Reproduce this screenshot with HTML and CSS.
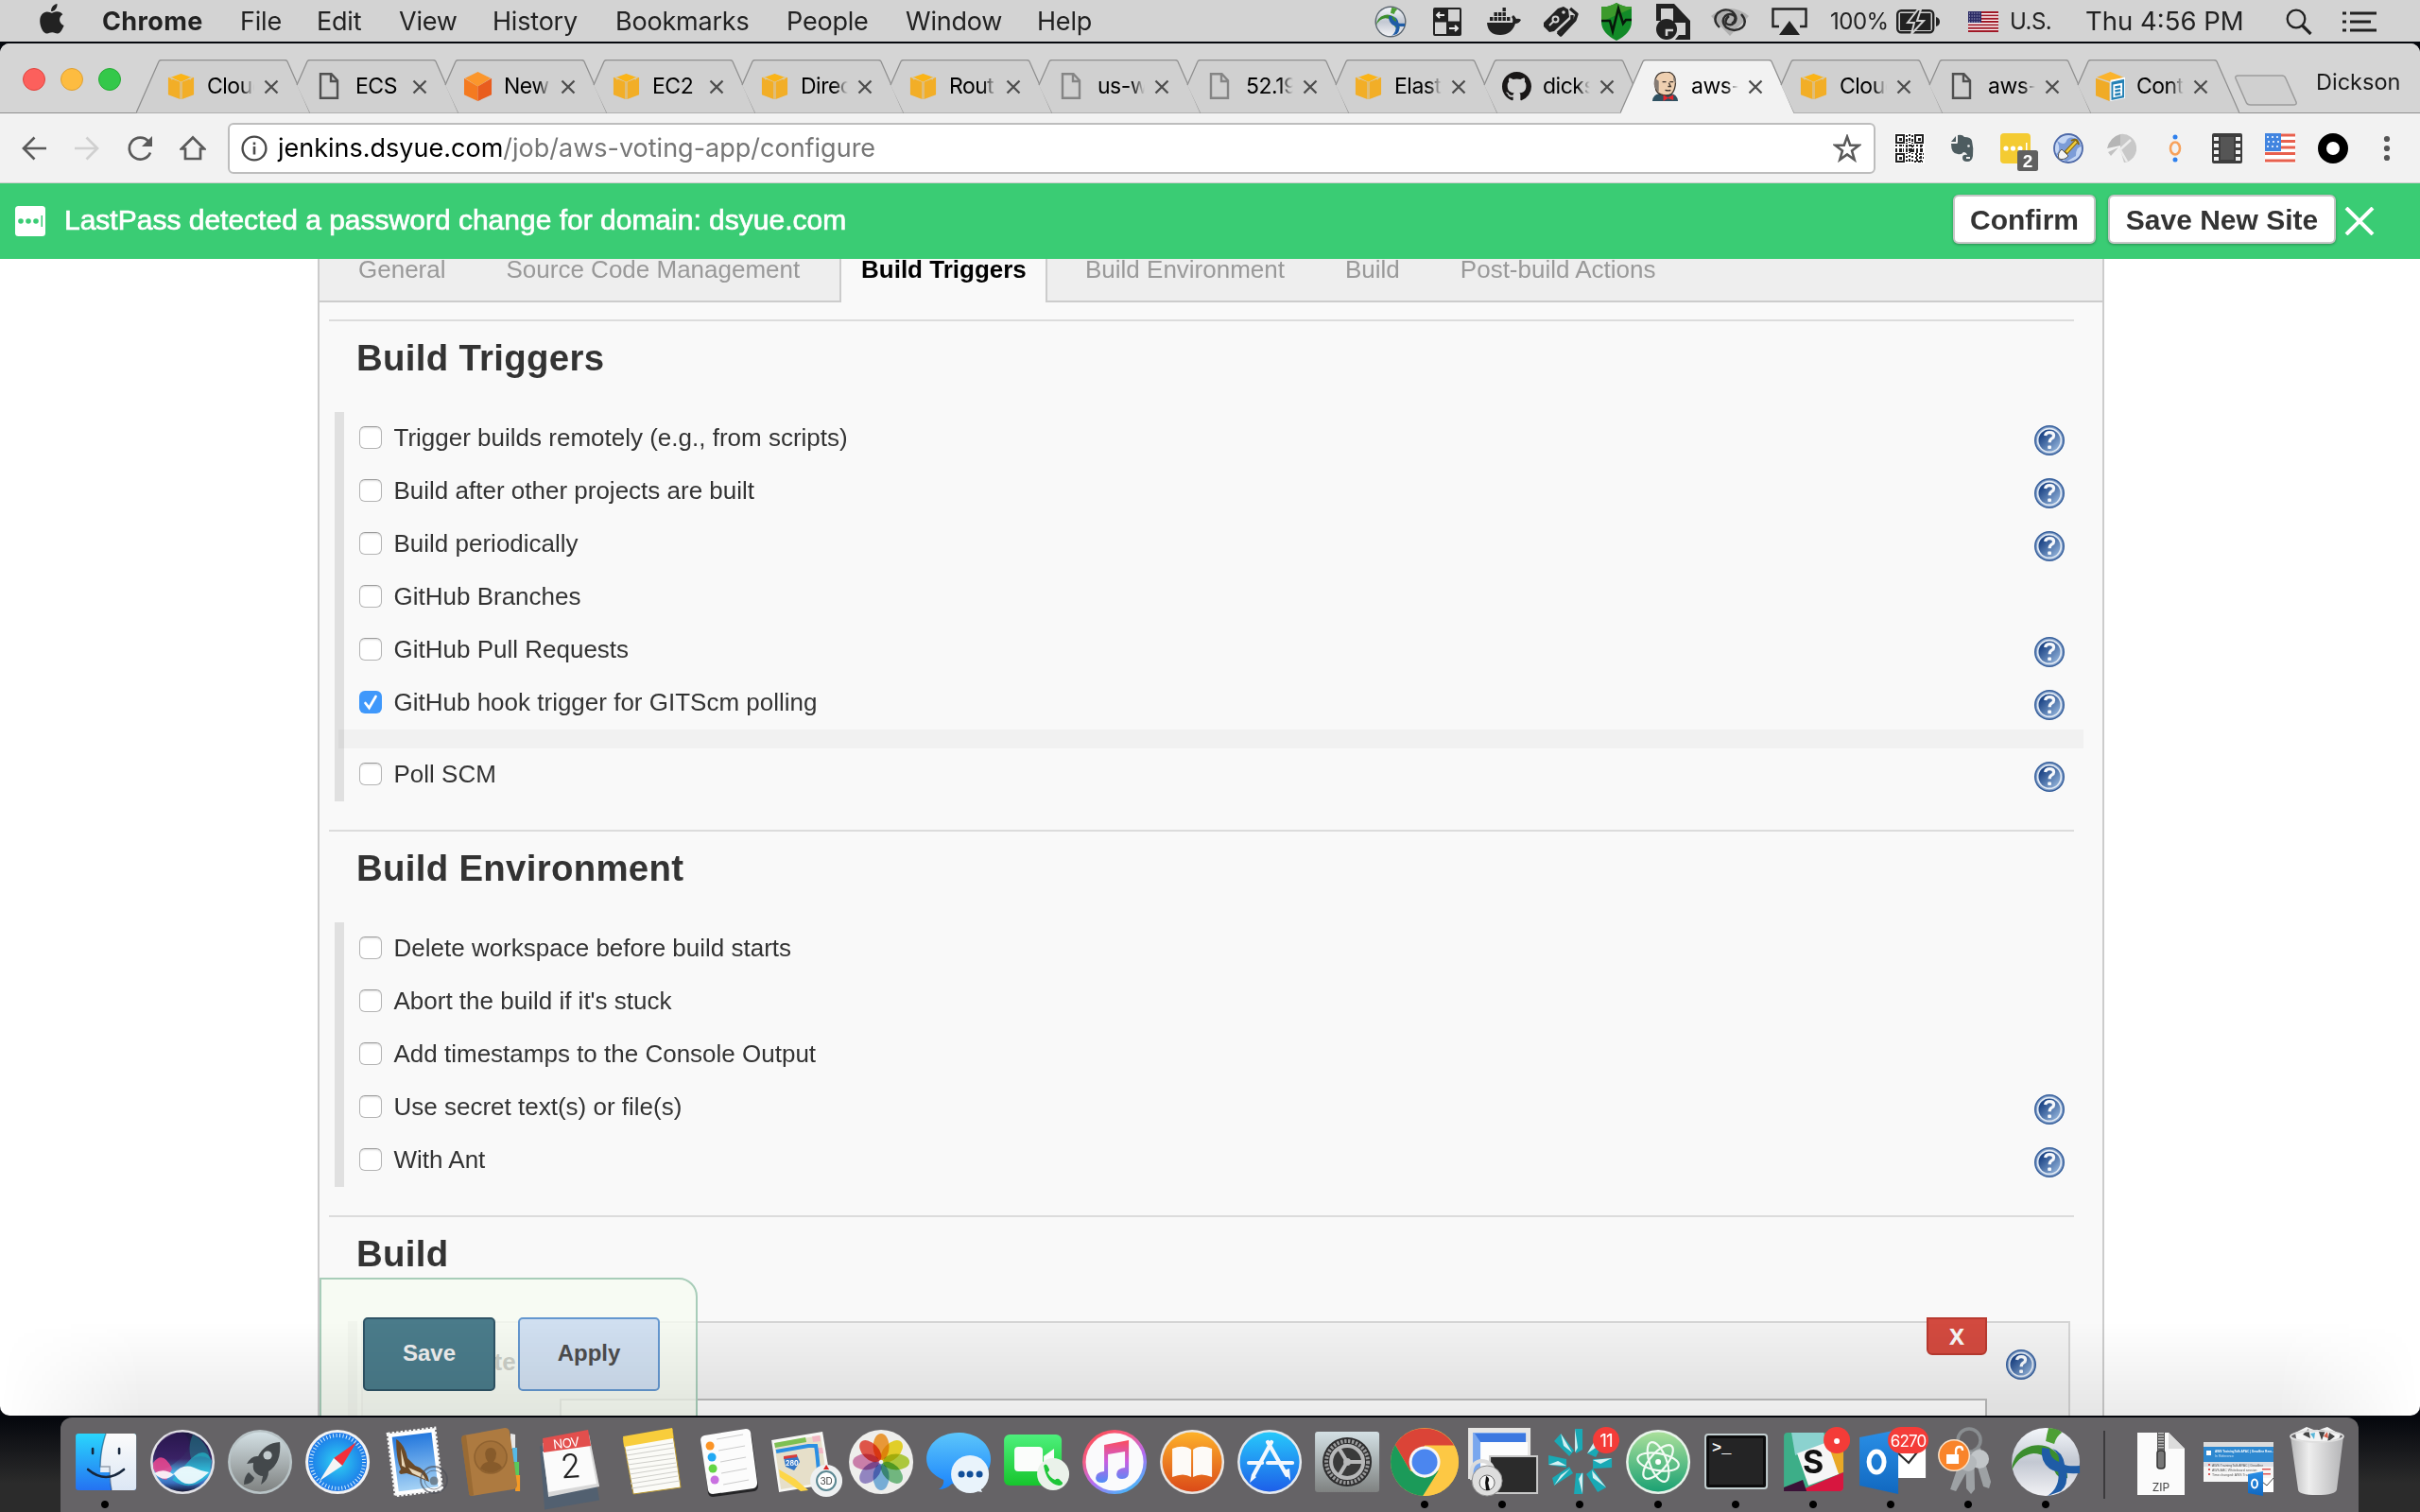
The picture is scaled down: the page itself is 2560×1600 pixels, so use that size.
FILE: index.html
```html
<!DOCTYPE html>
<html lang="en">
<head>
<meta charset="utf-8">
<title>aws-voting-app Config [Jenkins]</title>
<link rel="stylesheet" href="styles.css">
</head>
<body>
<svg class="defs" width="0" height="0">
  <defs>
    <linearGradient id="gHelp" x1="0" y1="0" x2="1" y2="1"><stop offset=".2" stop-color="#1f4788"/><stop offset=".9" stop-color="#8fb0d8"/></linearGradient>
    <linearGradient id="gFinder" x1="0" y1="0" x2="0" y2="1"><stop offset="0" stop-color="#2ad6fd"/><stop offset="1" stop-color="#2472f2"/></linearGradient>
    <linearGradient id="gFinder2" x1="0" y1="0" x2="0" y2="1"><stop offset="0" stop-color="#fbfbfb"/><stop offset="1" stop-color="#dce7f5"/></linearGradient>
    <linearGradient id="gSiri" x1="0" y1="0" x2="0" y2="1"><stop offset="0" stop-color="#1c1740"/><stop offset=".45" stop-color="#3b2a6a"/><stop offset=".68" stop-color="#4ab6ea"/><stop offset=".85" stop-color="#3b6fc0"/><stop offset="1" stop-color="#141432"/></linearGradient>
    <linearGradient id="gSilver" x1="0" y1="0" x2="0" y2="1"><stop offset="0" stop-color="#d3e0e4"/><stop offset="1" stop-color="#7f8281"/></linearGradient>
    <radialGradient id="gSafari"><stop offset="0" stop-color="#2fd3f3"/><stop offset="1" stop-color="#1b76e8"/></radialGradient>
    <linearGradient id="gSky" x1="0" y1="0" x2="0" y2="1"><stop offset="0" stop-color="#2478dd"/><stop offset="1" stop-color="#a5d2f5"/></linearGradient>
    <linearGradient id="gMsg" x1="0" y1="0" x2="0" y2="1"><stop offset="0" stop-color="#5cc6fb"/><stop offset="1" stop-color="#1a83fc"/></linearGradient>
    <linearGradient id="gFt" x1="0" y1="0" x2="0" y2="1"><stop offset="0" stop-color="#4df07c"/><stop offset="1" stop-color="#17c52d"/></linearGradient>
    <linearGradient id="gTunes" x1=".2" y1="0" x2=".8" y2="1"><stop offset="0" stop-color="#fb4a57"/><stop offset=".3" stop-color="#f55f8a"/><stop offset=".6" stop-color="#b36bf5"/><stop offset="1" stop-color="#35c4fa"/></linearGradient>
    <linearGradient id="gNote" x1="0" y1="0" x2="0" y2="1"><stop offset="0" stop-color="#fb4d5c"/><stop offset=".5" stop-color="#c95de0"/><stop offset="1" stop-color="#4f8df7"/></linearGradient>
    <linearGradient id="gBooks" x1="0" y1="0" x2="0" y2="1"><stop offset="0" stop-color="#fdb12a"/><stop offset="1" stop-color="#db4a18"/></linearGradient>
    <linearGradient id="gStore" x1="0" y1="0" x2="0" y2="1"><stop offset="0" stop-color="#27c8fb"/><stop offset="1" stop-color="#1d5fe9"/></linearGradient>
    <linearGradient id="gAtom" x1="0" y1="0" x2="0" y2="1"><stop offset="0" stop-color="#a9df9a"/><stop offset="1" stop-color="#1ba173"/></linearGradient>
    <linearGradient id="gBall" x1="0" y1="0" x2="0" y2="1"><stop offset="0" stop-color="#f4f7fb"/><stop offset=".5" stop-color="#c3c8d2"/><stop offset="1" stop-color="#f2f2f5"/></linearGradient>
    <linearGradient id="gTrash" x1="0" y1="0" x2="1" y2="0"><stop offset="0" stop-color="#b9b9ba"/><stop offset=".35" stop-color="#eeeeee"/><stop offset="1" stop-color="#b4b4b6"/></linearGradient>
    <linearGradient id="gOut" x1="0" y1="0" x2="0" y2="1"><stop offset="0" stop-color="#2a8fe6"/><stop offset="1" stop-color="#1168c0"/></linearGradient>

    <symbol id="tab-first" viewBox="0 0 184 57"><path class="tab-fill" d="M0 56.500L24 2Q25 .5 27 .5H157Q159 .5 160 2L184 56.500z"/><path class="tab-line" d="M0 56.500L24 2Q25 .5 27 .5H157Q159 .5 160 2L184 56.500"/></symbol>
    <symbol id="tab-rest" viewBox="0 0 184 57"><path class="tab-fill" d="M27 56.500L13 27L24 2Q25 .5 27 .5H157Q159 .5 160 2L184 56.500z"/><path class="tab-line" d="M13 27L24 2Q25 .5 27 .5H157Q159 .5 160 2L184 56.500"/></symbol>
    <symbol id="tab-active" viewBox="0 0 184 57"><path class="tab-on" d="M0 57L24 2Q25 .5 27 .5H157Q159 .5 160 2L184 57z"/><path class="tab-line" d="M0 56.500L24 2Q25 .5 27 .5H157Q159 .5 160 2L184 56.500"/></symbol>

    <symbol id="cube" viewBox="0 0 32 32"><path fill="#fbb416" d="M16 2l11 4-11 5-11-5z"/><path fill="#f2ae27" d="M2 6l13 5v19L2 25zM30 6l-13 5v19l13-5z"/><path fill="#e0bd78" d="M14.500 11h3v19h-3z"/><path fill="#d8c8a0" d="M3 5l5 2-2 2zM29 5l-5 2 2 2z"/></symbol>
    <symbol id="cube-orange" viewBox="0 0 32 32"><path fill="#fb962c" d="M16 0l14 7-14 9L2 7z"/><path fill="#f47a20" d="M1 7l15 9v16L1 25z"/><path fill="#e95d1e" d="M31 7l-15 9v16l15-7z"/></symbol>
    <symbol id="cube-doc" viewBox="0 0 32 32"><path fill="#fbb32b" d="M16 0l14 6-13 5L1 6z"/><path fill="#f0ab26" d="M0 7l15 5v20L0 26z"/><path fill="#fff" d="M16 9l16-3v23l-16 3z"/><path fill="#2481b5" d="M17 11l14-3v20l-14 3z"/><path fill="#fff" d="M19 14l10-2v14l-10 2z"/><path stroke="#2481b5" stroke-width="2.500" d="M21 17l6-1M21 21l6-1M21 25l6-1"/></symbol>
    <symbol id="page" viewBox="0 0 22 30"><path fill="none" stroke="currentColor" stroke-width="2.400" d="M2 2.200h11.500l6.500 7V27.800H2zM13 2v8h7"/></symbol>
    <symbol id="octocat" viewBox="0 0 16 16"><path fill="#191717" d="M8 0C3.580 0 0 3.580 0 8c0 3.540 2.290 6.530 5.470 7.590.4.070.55-.17.55-.38 0-.19-.010-.82-.010-1.490-2.010.37-2.530-.49-2.690-.94-.09-.23-.48-.94-.82-1.130-.28-.15-.68-.52-.010-.53.630-.010 1.080.58 1.230.82.720 1.210 1.870.87 2.330.66.070-.52.280-.87.510-1.070-1.780-.2-3.640-.89-3.640-3.950 0-.87.310-1.590.82-2.150-.08-.2-.36-1.020.08-2.120 0 0 .67-.21 2.200.82.640-.18 1.320-.27 2-.27s1.360.09 2 .27c1.530-1.040 2.200-.82 2.200-.82.440 1.100.160 1.920.08 2.120.510.560.82 1.270.82 2.150 0 3.070-1.870 3.750-3.650 3.950.290.250.54.730.54 1.480 0 1.070-.010 1.930-.010 2.200 0 .210.150.46.55.38A8.010 8.010 0 0 0 16 8c0-4.420-3.580-8-8-8z"/></symbol>
    <symbol id="jenkins" viewBox="0 0 32 32"><path fill="#2f5161" d="M2 32q1-8 8-8h12q7 0 8 8z"/><path fill="#eecfb0" stroke="#3c332c" stroke-width="1.300" d="M6 20Q2 4 12 1q10-3 14 4 2 4 1 10t-4 9q-5 3-11 1-4-1-6-5z"/><path fill="#857b74" d="M5 7q-3 7 1 12l3 3V10zM25 5q3 3 3 8l-3-4z"/><path stroke="#3c332c" stroke-width="1.300" fill="none" d="M13 11h4M21 11h4M20 12l2 4h-3M16 20q4 1 6 0"/><path fill="#e8262c" d="M14 25l5 3 6-3v6l-6-2-5 3z"/></symbol>
    <symbol id="close" viewBox="0 0 16 16"><path stroke="#4d4d4d" stroke-width="2.300" d="M1.500 1.500l13 13M14.500 1.500l-13 13"/></symbol>
    <symbol id="help" viewBox="0 0 32 32"><circle cx="16" cy="16" r="16" fill="#365f9c"/><circle cx="16" cy="16" r="14.500" fill="#83a0c9"/><circle cx="16" cy="16" r="13.200" fill="#e3ebf5"/><circle cx="16" cy="16" r="11.500" fill="url(#gHelp)"/><path fill="none" stroke="#f7f9fc" stroke-width="3.200" d="M11.600 11q.4-3.400 4.600-3.400 4.400 0 4.400 3.300 0 2-2.200 3.200-2.200 1.200-2.200 4.100"/><rect x="14.200" y="21.500" width="3.800" height="3.600" rx="1" fill="#f7f9fc"/></symbol>
    <symbol id="usflag" viewBox="0 0 32 22"><path fill="#fff" d="M0 0h32v22H0z"/><path stroke="#a01826" stroke-width="1.900" d="M0 1h32M0 4.400h32M0 7.700h32M0 11h32M0 14.400h32M0 17.700h32M0 21h32"/><path fill="#2c2c66" d="M0 0h14v12H0z"/><path stroke="#c5c8df" stroke-width="1" stroke-dasharray="1 1.600" d="M1 2h12M1 5h12M1 8h12M1 11h12"/></symbol>
    <symbol id="globe-ball" viewBox="0 0 74 74"><circle cx="37" cy="37" r="36" fill="url(#gBall)"/><path fill="#3c8e2e" d="M1 46Q2 26 22 20 44 16 54 36 60 46 60 54 50 56 46 46 40 28 24 28 8 30 1 46z"/><path fill="#4d9f35" d="M40 1q12 1 14 5-6 4-8 12l-9-3Q38 8 40 1z"/><path fill="#1f5ca6" d="M33 22q-2 14 8 22 8 6 32 5v-8q-12 1-16-1-2-14-13-17 8 6 7 14-10-4-10-14z"/><path fill="#1f5ca6" d="M50 46h9q2 16-6 22l-14 5q14-10 11-27z"/></symbol>
  </defs>
</svg>

<header class="menubar">
  <svg class="apple" viewBox="0 0 26 32"><path fill="#222" d="M18.500 0c.3 2.700-.8 4.700-2 6.100-1.300 1.500-2.900 2.100-4.400 2-.2-2.500.7-4.400 2-5.800C15.300 1 17 .2 18.500 0zM12.800 9.700c1 0 2.900-1.500 5.500-1.400 2.700.1 4.800 1.200 6 3-4.700 3-4.200 9.400 1.300 11.700-1 3-3.900 8.500-6.700 8.600-2 .1-3-1.300-5.600-1.300s-3.500 1.200-5.500 1.300C3.500 31.700.3 24.200.2 18.300.1 12 4 8.600 7.700 8.500c2.200 0 4 1.200 5.100 1.200z"/></svg>
  <nav class="menus">
    <b>Chrome</b><span>File</span><span>Edit</span><span>View</span><span>History</span><span>Bookmarks</span><span>People</span><span>Window</span><span>Help</span>
  </nav>
  <div class="status">
    <svg viewBox="0 0 34 34" width="34" height="34"><circle cx="17" cy="17" r="16.500" fill="#5c6670"/><svg x="1.500" y="1.500" width="31" height="31"><use href="#globe-ball"/></svg></svg>
    <svg viewBox="0 0 30 30" width="30" height="30"><rect width="30" height="30" rx="2" fill="#222"/><path fill="#d3d3d3" d="M16 2h12v12.500H16zM2 15.500h12V28H2z"/><path stroke="#e8e8e8" stroke-width="2" fill="none" d="M4 8h8M7 5L4 8l3 3M17 22h9M23 19l3 3-3 3"/></svg>
    <svg viewBox="0 0 36 30" width="36" height="30"><path fill="#222" d="M0 16h27q1-4-1-6l2-2q2 2 3 4 3-1 5 1-2 4-6 4-4 12-16 12Q1 29 0 16z"/><path fill="#222" d="M3 10h3.400v4H3zM7.500 10h3.400v4H7.500zM12 10h3.400v4H12zM16.500 10h3.400v4h-3.400zM21 10h3.400v4H21zM7.500 5h3.400v4H7.500zM12 5h3.400v4H12zM16.500 5h3.400v4h-3.400zM16.500 0h3.400v4h-3.400z"/></svg>
    <svg viewBox="0 0 38 34" width="38" height="34"><path fill="#222" d="M1 18L16 3l6-2 5 3 1 8-16 15-5 1-6-6z"/><circle cx="22" cy="7" r="1.800" fill="#d3d3d3"/><g fill="none" stroke="#d3d3d3" stroke-width="2"><circle cx="13.500" cy="14.500" r="3"/><path d="M11.500 16.500L7 21"/></g><path fill="none" stroke="#222" stroke-width="3.400" stroke-linejoin="round" d="M29 3l7 6-2 6-15 16-3-3"/><path fill="none" stroke="#222" stroke-width="3.400" d="M31 10v5L16 29"/></svg>
    <svg viewBox="0 0 32 40" width="32" height="40"><path fill="#128a28" d="M16 0q8 5 16 4v16q0 12-16 20Q0 32 0 20V4q8 1 16-4z"/><path fill="#3c9a2c" d="M16 0q8 5 16 4v2L0 20V4q8 1 16-4z"/><path fill="none" stroke="#07160a" stroke-width="2.600" d="M0 19h9l3 11 6-24 5 16 3-4h6"/></svg>
    <svg viewBox="0 0 36 38" width="36" height="38"><path fill="#222" d="M0 0h19l17 18v20H20l4-5h7V20H18V5H5v13H0z"/><circle cx="11" cy="27" r="11" fill="#222"/><path fill="none" stroke="#d3d3d3" stroke-width="2.600" d="M11 34v-6h7"/></svg>
    <svg viewBox="0 0 40 34" width="40" height="34"><path fill="#a6a6a6" d="M0 11Q20-5 40 11L20 32z" opacity=".8"/><g fill="none" stroke="#2c2c2c" stroke-width="2.400"><path d="M9 23Q1 15 7 8q7-6 15-2 7 6 3 12-4 4-9 1-2-4 3-8"/><path d="M32 9q7 8 1 14-8 6-17 0-6-7-1-12 5-4 10 0 2 5-3 8"/></g></svg>
    <svg viewBox="0 0 38 30" width="38" height="30"><path fill="none" stroke="#222" stroke-width="2.400" d="M8 20H1.500V1.500h35V20H30"/><path fill="#222" d="M19 14l11 15H8z"/></svg>
    <span class="s-txt s-pct">100%</span>
    <svg viewBox="0 0 46 26" width="46" height="26"><rect x="1.200" y="1.200" width="38" height="23" rx="4" fill="none" stroke="#222" stroke-width="2.400"/><path fill="#222" d="M42 8q4 1 4 5t-4 5zM4 4h32.500v18H4z"/><path fill="#222" stroke="#d3d3d3" stroke-width="2" d="M23 0L12 14h7l-3 12 13-14h-7l4-12z"/></svg>
    <svg viewBox="0 0 32 22" width="32" height="22"><use href="#usflag"/></svg>
    <span class="s-txt s-us">U.S.</span>
    <span class="s-txt s-time">Thu 4:56 PM</span>
    <svg viewBox="0 0 28 28" width="28" height="28"><circle cx="11" cy="11" r="9.300" fill="none" stroke="#222" stroke-width="2.300"/><path stroke="#222" stroke-width="3.200" d="M17.500 18l9 9"/></svg>
    <svg viewBox="0 0 36 22" width="36" height="22"><path stroke="#222" stroke-width="3.200" d="M0 2h4M8 2h28M0 11h4M8 11h22M0 20h4M8 20h28"/></svg>
  </div>
</header>

<main class="window">
  <div class="tabstrip">
    <div class="lights"><i class="red"></i><i class="yellow"></i><i class="green"></i></div>
    <div class="tabs">
      <div class="tab"><svg class="shape"><use href="#tab-first"/></svg><svg class="fav"><use href="#cube"/></svg><span>Cloud</span><svg class="x"><use href="#close"/></svg></div>
      <div class="tab"><svg class="shape"><use href="#tab-rest"/></svg><svg class="fav doc dark"><use href="#page"/></svg><span class="full">ECS</span><svg class="x"><use href="#close"/></svg></div>
      <div class="tab"><svg class="shape"><use href="#tab-rest"/></svg><svg class="fav"><use href="#cube-orange"/></svg><span>New</span><svg class="x"><use href="#close"/></svg></div>
      <div class="tab"><svg class="shape"><use href="#tab-rest"/></svg><svg class="fav"><use href="#cube"/></svg><span class="full">EC2</span><svg class="x"><use href="#close"/></svg></div>
      <div class="tab"><svg class="shape"><use href="#tab-rest"/></svg><svg class="fav"><use href="#cube"/></svg><span>Direc</span><svg class="x"><use href="#close"/></svg></div>
      <div class="tab"><svg class="shape"><use href="#tab-rest"/></svg><svg class="fav"><use href="#cube"/></svg><span>Rout</span><svg class="x"><use href="#close"/></svg></div>
      <div class="tab"><svg class="shape"><use href="#tab-rest"/></svg><svg class="fav doc"><use href="#page"/></svg><span>us-w</span><svg class="x"><use href="#close"/></svg></div>
      <div class="tab"><svg class="shape"><use href="#tab-rest"/></svg><svg class="fav doc"><use href="#page"/></svg><span>52.19</span><svg class="x"><use href="#close"/></svg></div>
      <div class="tab"><svg class="shape"><use href="#tab-rest"/></svg><svg class="fav"><use href="#cube"/></svg><span>Elast</span><svg class="x"><use href="#close"/></svg></div>
      <div class="tab"><svg class="shape"><use href="#tab-rest"/></svg><svg class="fav"><use href="#octocat"/></svg><span>dicks</span><svg class="x"><use href="#close"/></svg></div>
      <div class="tab"><svg class="shape"><use href="#tab-active"/></svg><svg class="fav"><use href="#jenkins"/></svg><span>aws-</span><svg class="x"><use href="#close"/></svg></div>
      <div class="tab"><svg class="shape"><use href="#tab-rest"/></svg><svg class="fav"><use href="#cube"/></svg><span>Cloud</span><svg class="x"><use href="#close"/></svg></div>
      <div class="tab"><svg class="shape"><use href="#tab-rest"/></svg><svg class="fav doc dark"><use href="#page"/></svg><span>aws-</span><svg class="x"><use href="#close"/></svg></div>
      <div class="tab"><svg class="shape"><use href="#tab-rest"/></svg><svg class="fav"><use href="#cube-doc"/></svg><span>Cont</span><svg class="x"><use href="#close"/></svg></div>
    </div>
    <svg class="newtab" viewBox="0 0 66 33"><path fill="#d0d0d0" stroke="#9c9c9c" stroke-width="1.500" d="M4 1h46q3 0 4 3l11 25q1 3-3 3H17q-4 0-5-3L1 4Q0 1 4 1z"/></svg>
    <span class="profile">Dickson</span>
  </div>

  <div class="toolbar">
    <svg class="nav-back" viewBox="0 0 26 26"><path fill="none" stroke="#5a5a5a" stroke-width="2.700" d="M26 13H2M13.500 1.500L2 13l11.500 11.500"/></svg>
    <svg class="nav-fwd" viewBox="0 0 26 26"><path fill="none" stroke="#d0d0d0" stroke-width="2.700" d="M0 13h24M12.500 1.500L24 13 12.500 24.500"/></svg>
    <svg class="nav-reload" viewBox="0 0 28 28"><path fill="none" stroke="#5a5a5a" stroke-width="2.700" d="M25 18.500A11.500 11.500 0 1 1 23 6.500"/><path fill="#5a5a5a" d="M27 1v11H16z"/></svg>
    <svg class="nav-home" viewBox="0 0 28 28"><path fill="none" stroke="#5a5a5a" stroke-width="2.700" d="M2 14.500L14 2.500l12 12h-4V25H6V14.500z"/></svg>
    <div class="omnibox">
      <svg class="info" viewBox="0 0 28 28"><circle cx="14" cy="14" r="12.400" fill="none" stroke="#4a4a4a" stroke-width="2.400"/><path fill="#4a4a4a" d="M12.700 12h2.600v8.500h-2.600zM12.700 7.500h2.600v2.700h-2.600z"/></svg>
      <span class="url">jenkins.dsyue.com<em>/job/aws-voting-app/configure</em></span>
      <svg class="star" viewBox="0 0 28 28"><path fill="none" stroke="#5a5a5a" stroke-width="2.400" d="M14 2.500l3 8.500h8.700l-7 5.400 2.500 8.800L14 20l-7.200 5.200 2.500-8.800-7-5.400H11z"/></svg>
    </div>
    <div class="exts">
      <svg viewBox="0 0 32 32"><path fill="#fff" d="M0 0h32v32H0z"/><g fill="none" stroke="#222" stroke-width="2"><path d="M2 2h8v8H2zM22 2h8v8h-8zM2 22h8v8H2z"/><path stroke-dasharray="2 2 3 1 1 2" d="M13 2v28M16 1v30M19 2v28M1 13h30M1 17h30M1 19h30M22 22h9M22 26h9M21 30h9M24 12v18M28 13v17"/></g><path fill="#222" d="M5 5h3v3H5zM25 5h3v3h-3zM5 25h3v3H5z"/></svg>
      <svg viewBox="0 0 32 32"><path fill="#4d5c60" d="M11 2q5-1 7 2 7 0 8 4 2 8 1 16-1 6-6 6-5 0-5-4t5-3q-1-3-4-3-2 3-6 2-7 0-7-11h6q1 0 1-2z"/><path fill="#4d5c60" d="M9 3v6H4z"/><circle cx="22.500" cy="13.500" r="1.300" fill="#f2f2f2"/><path fill="#f2f2f2" d="M20 25h4v2h-4z"/></svg>
      <svg viewBox="0 0 42 42" class="lp-ext"><rect width="32" height="32" rx="4" fill="#f4cb32"/><circle cx="6" cy="16" r="2.600" fill="#fff"/><circle cx="13.500" cy="16" r="2.600" fill="#fff"/><circle cx="21" cy="16" r="2.600" fill="#fff"/><path fill="#fff" d="M27 10h1.500v10H27z"/><rect x="18" y="18" width="22" height="22" rx="2.500" fill="#606060"/><text x="29" y="36" text-anchor="middle" class="lp-num">2</text></svg>
      <svg viewBox="0 0 32 32"><circle cx="16" cy="16" r="15" fill="#c4d6f4" stroke="#4c68a8" stroke-width="1.800"/><path fill="#4d74c4" d="M4 8q8 6 10 0T26 6l4 8q-6 0-6 10L14 30 3 22q6-4 1-14z" opacity=".6"/><path stroke="#8a6a10" stroke-width="4.500" d="M24 9L13 21"/><path stroke="#f3cf3c" stroke-width="2.500" d="M25 8L14 20"/><path fill="#f5f5f5" stroke="#555" d="M9 17l7 7q-4 5-10 3-2-6 3-10z"/><path fill="none" stroke="#8a6a10" stroke-width="2" d="M19 8q6-4 8 4"/></svg>
      <svg viewBox="0 0 32 32"><path fill="#c8c8c8" d="M15 1a15 15 0 1 1 4 30L15 18z"/><path fill="#b5b5b5" d="M1 16Q4 4 15 1v12z"/><path stroke="#ececec" stroke-width="2.500" d="M14 18L26 7M14 16l8 14"/><path fill="#c2c2c2" d="M2 20l11-5-8 9z"/></svg>
      <svg viewBox="0 0 32 32"><ellipse cx="17" cy="16" rx="5" ry="6.500" fill="none" stroke="#f7a25c" stroke-width="2.600"/><circle cx="17" cy="4" r="2.500" fill="#2f80ed"/><circle cx="17" cy="28" r="2.500" fill="#2f80ed"/></svg>
      <svg viewBox="0 0 32 32"><rect width="32" height="32" rx="2" fill="#3d3d3d"/><g fill="#f2f2f2"><path d="M2 4h5v4H2zM2 11h5v4H2zM2 18h5v4H2zM2 25h5v4H2zM25 4h5v4h-5zM25 11h5v4h-5zM25 18h5v4h-5zM25 25h5v4h-5z"/></g><path fill="#555" d="M9 4h14v24H9z"/></svg>
      <svg viewBox="0 0 32 32"><path fill="#fff" d="M0 0h32v32H0z"/><path stroke="#e8604e" stroke-width="3.200" d="M0 2h32M0 8.500h32M0 15h32M0 21.500h32M0 29h32"/><path fill="#4285e0" d="M0 0h17v19H0z"/><path stroke="#d5e5fa" stroke-width="2" stroke-dasharray="2 3" d="M2 4h14M3 9h13M2 14h14"/></svg>
      <svg viewBox="0 0 32 32"><circle cx="16" cy="16" r="11.500" fill="#fff" stroke="#000" stroke-width="9"/></svg>
    </div>
    <svg class="dots" viewBox="0 0 8 28"><circle cx="4" cy="4" r="3.100"/><circle cx="4" cy="14" r="3.100"/><circle cx="4" cy="24" r="3.100"/></svg>
  </div>

  <div class="lastpass">
    <svg class="lp-logo" viewBox="0 0 32 32"><rect width="32" height="32" rx="3.500" fill="#fff"/><g fill="#3acc74"><circle cx="6" cy="16" r="2.800"/><circle cx="14" cy="16" r="2.800"/><circle cx="22" cy="16" r="2.800"/><path d="M27.500 10H29v12h-1.500z"/></g></svg>
    <span class="lp-msg">LastPass detected a password change for domain: dsyue.com</span>
    <button class="b-confirm">Confirm</button>
    <button class="b-save">Save New Site</button>
    <svg class="lp-x" viewBox="0 0 32 30"><path stroke="#fff" stroke-width="4" d="M2 1l28 28M30 1L2 29"/></svg>
  </div>

  <div class="page">
    <div class="panel">
      <div class="sections">
        <div class="sec s-left"><span>General</span><span>Source Code Management</span></div>
        <div class="sec s-on">Build Triggers</div>
        <div class="sec s-right"><span>Build Environment</span><span>Build</span><span>Post-build Actions</span></div>
      </div>

      <section>
        <h2>Build Triggers</h2>
        <div class="group">
          <label class="row"><i class="cb"></i><span>Trigger builds remotely (e.g., from scripts)</span><svg class="q"><use href="#help"/></svg></label>
          <label class="row"><i class="cb"></i><span>Build after other projects are built</span><svg class="q"><use href="#help"/></svg></label>
          <label class="row"><i class="cb"></i><span>Build periodically</span><svg class="q"><use href="#help"/></svg></label>
          <label class="row"><i class="cb"></i><span>GitHub Branches</span></label>
          <label class="row"><i class="cb"></i><span>GitHub Pull Requests</span><svg class="q"><use href="#help"/></svg></label>
          <label class="row"><i class="cb on"><svg viewBox="0 0 24 24"><path fill="none" stroke="#fff" stroke-width="2.700" stroke-linecap="round" d="M6.500 13l4 5L17.500 6"/></svg></i><span>GitHub hook trigger for GITScm polling</span><svg class="q"><use href="#help"/></svg></label>
          <div class="strip"></div>
          <label class="row"><i class="cb"></i><span>Poll SCM</span><svg class="q"><use href="#help"/></svg></label>
        </div>
      </section>

      <section>
        <h2>Build Environment</h2>
        <div class="group">
          <label class="row"><i class="cb"></i><span>Delete workspace before build starts</span></label>
          <label class="row"><i class="cb"></i><span>Abort the build if it's stuck</span></label>
          <label class="row"><i class="cb"></i><span>Add timestamps to the Console Output</span></label>
          <label class="row"><i class="cb"></i><span>Use secret text(s) or file(s)</span><svg class="q"><use href="#help"/></svg></label>
          <label class="row"><i class="cb"></i><span>With Ant</span><svg class="q"><use href="#help"/></svg></label>
        </div>
      </section>

      <section>
        <h2>Build</h2>
        <div class="builder">
          <div class="step">
            <div class="step-head"><b>Execute</b><svg class="q"><use href="#help"/></svg></div>
            <div class="code">#!/bin/bash f</div>
            <button class="del">X</button>
          </div>
        </div>
      </section>
    </div>
    <div class="sticky"><button class="save">Save</button><button class="apply">Apply</button></div>
    <div class="shade"></div>
  </div>
</main>

<footer class="dock">
  <svg class="app run" viewBox="0 0 82 100"><rect x="10" y="17" width="64" height="60" rx="3" fill="url(#gFinder)"/><path fill="url(#gFinder2)" d="M42 17h29q3 0 3 3v54q0 3-3 3H48q-2-9-2-19H36q0-22 6-41z"/><path fill="none" stroke="#16263c" stroke-width="2.600" stroke-linecap="round" d="M28 33v5M56 33v5M23 55q19 16 38 0"/><path fill="none" stroke="#16263c" stroke-width="1.500" d="M42 17q-6 17-6 35h10q0 15 2 25" opacity=".4"/></svg>
  <svg class="app" viewBox="0 0 82 100"><circle cx="41" cy="47" r="34" fill="#e3e3e8"/><circle cx="41" cy="47" r="31.500" fill="url(#gSiri)"/><path fill="#3a1660" d="M14 30q14-20 30-12 10 12-6 26T12 56z" opacity=".4"/><path fill="#1f8a92" d="M52 18q16 8 18 26-10-6-20 0-4-14 2-26z" opacity=".5"/><path fill="#f0458f" d="M10 48q10-14 20 6l-6 12q-8 0-14-12z" opacity=".85"/><path fill="#20c8d8" d="M72 46q-8-20-28 4L30 66q20 14 38-4z" opacity=".6"/><path fill="#fff" d="M11 59q10-6 20 1 10-12 22-7 8 4 16 5-6 6-15 11-12 5-22-9-10 10-21-1z" opacity=".88"/></svg>
  <svg class="app" viewBox="0 0 82 100"><circle cx="41" cy="47" r="34" fill="#b9c4c7"/><circle cx="41" cy="47" r="31.500" fill="url(#gSilver)"/><path fill="#43484b" d="M62 26q-16 1-23 15-7-1-12 8l7-1q-1 6 1 9 4 5 9 5l-2 9q8-5 8-14 14-9 12-31z"/><circle cx="49" cy="40" r="4.600" fill="#c2cbce"/><path fill="#43484b" d="M29 58l6 6q-2 6-11 7 0-9 5-13z"/></svg>
  <svg class="app" viewBox="0 0 82 100"><circle cx="41" cy="47" r="34" fill="#f3f3f3"/><circle cx="41" cy="47" r="31" fill="url(#gSafari)"/><circle cx="41" cy="47" r="28" fill="none" stroke="#d6effc" stroke-width="4" stroke-dasharray="1 2.520"/><path fill="#f2303a" d="M61 26L37 43l9 8z"/><path fill="#f5f5f5" d="M22 67l15-24 9 8z"/></svg>
  <svg class="app" viewBox="0 0 82 100"><g transform="rotate(-7 41 47)"><rect x="16" y="14" width="50" height="66" fill="#fff" stroke="#f7f7f7" stroke-width="3" stroke-dasharray="2.500 2"/><rect x="20" y="18" width="42" height="58" fill="url(#gSky)"/></g><path fill="#6b4a28" d="M21 23q9 5 12 20l8 8q12 3 15 17l-12-5-12-4-6 1q-4-2 0-5-5-10-5-32z"/><path fill="#e9d8ba" d="M26 33l5 20-4-2zM34 53l14 6 5 7-15-7z"/><circle cx="61" cy="66" r="14" fill="none" stroke="#4b4f57" stroke-width="1.800" opacity=".65"/><circle cx="61" cy="66" r="10" fill="none" stroke="#4b4f57" opacity=".6"/><circle cx="61" cy="67" r="4.500" fill="#555" opacity=".6"/></svg>
  <svg class="app" viewBox="0 0 82 100"><path fill="#e8e8e8" d="M60 17l5 1v15h-5z"/><path fill="#55b9e6" d="M62 32h5v15h-5z"/><path fill="#5ac95b" d="M64 47h5v15h-5z"/><path fill="#f49a25" d="M65 61h5v17h-5z"/><path fill="#ad7a40" d="M10 19l44-8q4 0 5 4l8 56q0 4-4 5l-44 7q-3 0-3-3l-8-57q0-3 2-4z"/><path fill="#8d602d" d="M10 19q-2 1-2 4l8 57q0 3 3 3l2-1-8-63z" opacity=".6"/><circle cx="39" cy="42" r="17" fill="#a37139" stroke="#8f6230" stroke-width="1.600"/><path fill="#875b2b" d="M28 54q2-6 8-7-3-4-3-9 1-6 6-6t6 6q0 5-3 9 7 1 9 6-11 10-23 1z"/></svg>
  <svg class="app" viewBox="0 0 82 100"><path fill="#526070" d="M9 26l52-8 11 70-58 11z" transform="scale(1 .92) translate(0 7)"/><path fill="#d8d8d8" d="M12 24l49-9 11 55-54 11z" transform="translate(0 3)"/><path fill="#fbfbfb" d="M12 36l49-8 8 42-51 9z"/><path fill="#e24f4d" d="M12 22l48-9 3 17-50 7z"/><text x="23" y="32" transform="rotate(-7 36 28)" class="cal-mon">NOV</text><text x="42" y="64" text-anchor="middle" transform="rotate(-4 40 60)" class="cal-day">2</text></svg>
  <svg class="app" viewBox="0 0 82 100"><path fill="#fbfbf7" stroke="#b9972e" d="M14 22l52-10 9 62-50 7z"/><path fill="#f8cd3c" d="M14 20l52-9 1 11-52 9z"/><path stroke="#cfcfca" d="M17 35l50-8M18 40l50-8M18 45l50-7M19 50l50-7M20 55l50-7M21 60l50-8M22 65l50-8M22 70l50-8M23 75l51-8"/></svg>
  <svg class="app" viewBox="0 0 82 100"><path fill="#252527" d="M15 24l48-8q4 0 5 4l7 52q0 5-4 6l-44 6q-4 0-5-4z"/><path fill="#fcfcfc" d="M18 19l44-7q4 0 5 4l7 53q0 5-4 6l-43 6q-4 0-5-4L14 24q0-4 4-5z"/><circle cx="24" cy="30" r="4.500" fill="#fb9426"/><circle cx="26" cy="42" r="4.500" fill="#22a9f3"/><circle cx="27" cy="54" r="4.500" fill="#63d545"/><circle cx="29" cy="66" r="4.500" fill="#c971e0"/><path stroke="#ccc" d="M31 23l28-5M33 35l28-5M35 47l27-5M36 59l27-5M38 71l27-5"/></svg>
  <svg class="app" viewBox="0 0 82 100"><path fill="#f7f7f5" d="M7 24l54-9 9 55-55 9z"/><path fill="#e6dfc9" d="M10 27l49-8 7 49-49 8z"/><path fill="#7dc053" d="M10 27l33-6 1 5-33 6z"/><path fill="#f2b6c3" d="M50 20l8-1 1 6-8 1zM56 32l5 0 1 6-5 0z"/><path fill="#fdd648" d="M15 55l17 10 14 12-8 1-22-15z"/><path fill="none" stroke="#2b8fe3" stroke-width="4" d="M12 36l34-6 8 0q2 12 4 42"/><path fill="#3478c8" d="M20 42l14-2 3 7-6 9-9-4z"/><path fill="#d73c3a" d="M20 41l14-2 0 3-14 2z"/><text x="22" y="51" class="map-sign">280</text><circle cx="65" cy="67" r="17" fill="#eef0f1"/><circle cx="65" cy="67" r="10" fill="#fff" stroke="#5b8792" stroke-width="2"/><path fill="#d22" d="M65 50l3 5h-6z"/><text x="65" y="71" text-anchor="middle" class="map-3d">3D</text></svg>
  <svg class="app" viewBox="0 0 82 100"><circle cx="41" cy="47" r="34" fill="#eeeeec"/><g class="petals"><ellipse cx="41" cy="31" rx="8.500" ry="14" fill="#f9a33b"/><ellipse cx="41" cy="31" rx="8.500" ry="14" fill="#f2dd2c" transform="rotate(45 41 47)"/><ellipse cx="41" cy="31" rx="8.500" ry="14" fill="#b8d542" transform="rotate(90 41 47)"/><ellipse cx="41" cy="31" rx="8.500" ry="14" fill="#79c389" transform="rotate(135 41 47)"/><ellipse cx="41" cy="31" rx="8.500" ry="14" fill="#7fb8e6" transform="rotate(180 41 47)"/><ellipse cx="41" cy="31" rx="8.500" ry="14" fill="#9d8ed0" transform="rotate(225 41 47)"/><ellipse cx="41" cy="31" rx="8.500" ry="14" fill="#d887b7" transform="rotate(270 41 47)"/><ellipse cx="41" cy="31" rx="8.500" ry="14" fill="#ee5b4f" transform="rotate(315 41 47)"/></g></svg>
  <svg class="app" viewBox="0 0 82 100"><path fill="url(#gMsg)" d="M41 16c19 0 34 12 34 28S60 71 41 71q-4 0-7-1-6 6-14 6 6-4 5-10Q7 58 7 44c0-16 15-28 34-28z"/><circle cx="53" cy="60" r="20" fill="#e9f3fb"/><path fill="#e9f3fb" d="M55 77l11 2-4-8z"/><g fill="#124f99"><circle cx="44" cy="60" r="3.500"/><circle cx="53" cy="60" r="3.500"/><circle cx="63" cy="60" r="3.500"/></g></svg>
  <svg class="app" viewBox="0 0 82 100"><rect x="7" y="18" width="61" height="54" rx="6" fill="url(#gFt)"/><rect x="18" y="31" width="30" height="26" rx="4" fill="#fbfdfb"/><path fill="#fbfdfb" d="M49 41l11-8v22l-11-7z"/><circle cx="59" cy="60" r="17" fill="#eaf2ea"/><path fill="#1dc638" d="M49 51q2-3 4 0l2 4q0 2-2 3 3 6 8 8 2-2 4-1l4 4q0 3-4 3-13-2-16-21z"/></svg>
  <svg class="app" viewBox="0 0 82 100"><circle cx="41" cy="47" r="34" fill="url(#gTunes)"/><circle cx="41" cy="47" r="30.500" fill="#fafafc"/><path fill="url(#gNote)" d="M30 29l26-5v34q0 7-7 7-6 0-6-5 0-6 9-7V36l-18 3v23q0 7-6 7-7 0-7-5 0-6 9-7z"/></svg>
  <svg class="app" viewBox="0 0 82 100"><circle cx="41" cy="47" r="34" fill="#e9e6e3"/><circle cx="41" cy="47" r="31.500" fill="url(#gBooks)"/><path fill="#fdfaf7" d="M20 33q12-5 20 1v29q-8-5-20 0zM62 33q-12-5-20 1v29q8-5 20 0z"/></svg>
  <svg class="app" viewBox="0 0 82 100"><circle cx="41" cy="47" r="34" fill="#e6eaee"/><circle cx="41" cy="47" r="31.500" fill="url(#gStore)"/><path stroke="#f3f8fd" stroke-width="4.200" stroke-linecap="round" d="M43 26L24 61M39 26l20 35M19 48h14M39 48h26"/><path fill="#f3f8fd" d="M22 60l5 3-7 6zM56 56l6-2 1 13z"/></svg>
  <svg class="app" viewBox="0 0 82 100"><rect x="7" y="15" width="68" height="64" rx="3" fill="url(#gSilver)"/><circle cx="41" cy="47" r="26" fill="#2d2d2e"/><circle cx="41" cy="47" r="22" fill="none" stroke="#9a9b9c" stroke-width="4" stroke-dasharray="2.400 1.600"/><circle cx="41" cy="47" r="17" fill="#3a3a3a" stroke="#b7b8b9" stroke-width="4"/><path stroke="#b7b8b9" stroke-width="4" d="M41 47h17M41 47l-9-15M41 47l-9 15"/><circle cx="41" cy="47" r="4" fill="#b7b8b9"/></svg>
  <svg class="app run" viewBox="0 0 82 100"><circle cx="41" cy="47" r="36" fill="#fdc844"/><path fill="#db4437" d="M9.800 29A36 36 0 0 1 72 29.500H41L25.400 56z"/><path fill="#1b9a59" d="M9.800 29A36 36 0 0 0 40 83L56 56 41 64 25.400 56z"/><path fill="#fdc844" d="M72.500 30A36 36 0 0 1 39 83l17-27q4-14-6-26z"/><circle cx="41" cy="47" r="16.500" fill="#f6f6f6"/><circle cx="41" cy="47" r="13.500" fill="#4b86ef"/></svg>
  <svg class="app run" viewBox="0 0 82 100"><rect x="5" y="11" width="66" height="54" fill="#e7e6e4"/><rect x="10" y="16" width="56" height="46" fill="#79a7ee"/><path fill="#3c78e0" d="M12 17h54v9H18z"/><rect x="18" y="26" width="50" height="34" fill="#fdfdfd"/><rect x="28" y="41" width="50" height="39" fill="#2b2b2b" stroke="#c9c9c9" stroke-width="2"/><path fill="none" stroke="#dcdcdc" stroke-width="4" d="M9 66Q6 48 18 46q14 0 14 14"/><circle cx="25" cy="67" r="16" fill="#dedede" stroke="#909090"/><circle cx="25" cy="69" r="8" fill="#f4f4f4" stroke="#666"/><path fill="#111" d="M24 62q5 2 2 7l2 8h-4l-1-8z"/></svg>
  <svg class="app run" viewBox="0 0 82 100"><g fill="#19a9b5"><path d="M36 12h8v22l-7 4zM62 16l6 6-10 20-9-4zM75 43v10l-20 1 0-10zM69 74l-9 5-12-19 7-6zM44 81h-9l2-22 8 0zM14 72l-2-8 18-12 4 7zM8 50V40l19 4 0 9zM14 25l7-8 14 18-5 6z"/></g><g fill="#d4f0f2"><path d="M36 12l3 20-3 5zM62 16l-4 16-9 6zM75 43l-12 6-8-4zM69 74l-14-10-1-8zM44 81l-4-16 4-7zM14 72l7-11 10-7zM8 50l10-4 9 5zM21 17l3 13 9 7z"/></g><circle cx="69" cy="24" r="14" fill="#f43c38"/><text x="69" y="31" text-anchor="middle" class="badge">11</text></svg>
  <svg class="app run" viewBox="0 0 82 100"><circle cx="41" cy="47" r="34" fill="#e8f3ea"/><circle cx="41" cy="47" r="31.500" fill="url(#gAtom)"/><g fill="none" stroke="#f2fbf4" stroke-width="2.200"><ellipse cx="41" cy="47" rx="9" ry="22" transform="rotate(-20 41 47)"/><ellipse cx="41" cy="47" rx="9" ry="22" transform="rotate(40 41 47)"/><ellipse cx="41" cy="47" rx="9" ry="22" transform="rotate(100 41 47)"/></g><circle cx="41" cy="47" r="3" fill="#fff"/></svg>
  <svg class="app run" viewBox="0 0 82 100"><rect x="8" y="17" width="67" height="59" rx="4" fill="#c3cfd1"/><rect x="10" y="19" width="63" height="55" rx="2" fill="#0b0b0c"/><rect x="13" y="22" width="57" height="49" fill="#242425"/><text x="16" y="37" class="term">&gt;_</text></svg>
  <svg class="app run" viewBox="0 0 82 100"><rect x="10" y="16" width="63" height="62" rx="4" fill="#3dae88"/><path fill="#8bd2cf" d="M18 16h34l4 12-34 12z"/><path fill="#e9a826" d="M56 26l17-6v38l-6 2z"/><path fill="#f6f6f6" d="M24 38l32-12 12 34-32 12z"/><path fill="#d7163f" d="M30 76l43-18v16q0 4-4 4H30z"/><path fill="#3a1237" d="M10 78v-4l20-8 4 12z"/><text x="41" y="59" text-anchor="middle" class="slack-s">S</text><circle cx="66" cy="24" r="14" fill="#f43c38"/><circle cx="66" cy="25" r="3" fill="#fff"/></svg>
  <svg class="app run" viewBox="0 0 82 100"><rect x="44" y="28" width="34" height="36" fill="#fff"/><path fill="none" stroke="#2b2b2b" stroke-width="2.200" d="M47 36l13 12 16-20"/><path fill="url(#gOut)" d="M8 21l41-8v68L8 72z"/><ellipse cx="26" cy="47" rx="8" ry="11" fill="none" stroke="#fff" stroke-width="5"/><rect x="38" y="10" width="43" height="28" rx="14" fill="#f43c38"/><text x="59.500" y="31" text-anchor="middle" class="badge b4">6270</text></svg>
  <svg class="app run" viewBox="0 0 82 100"><circle cx="42" cy="24" r="12" fill="none" stroke="#898d90" stroke-width="3.500"/><path fill="#9da1a4" d="M30 52l12-14 6 4-20 36-6-2zM38 36h9l1 40-4 5-5-6zM46 36l8-4 11 36-2 7-6-2z"/><circle cx="53" cy="44" r="10" fill="#c1c5c8"/><circle cx="41" cy="48" r="9" fill="#b4b8bb"/><circle cx="26" cy="40" r="17" fill="#fbe2c8"/><circle cx="26" cy="40" r="15.500" fill="#f9842a"/><rect x="18" y="39" width="13" height="10" fill="#fff"/><path fill="none" stroke="#fff" stroke-width="2.400" d="M28 39v-4q0-4 4-4 3 0 3 4"/></svg>
  <svg class="app run" viewBox="0 0 82 100"><svg x="4" y="10" width="74" height="74"><use href="#globe-ball"/></svg></svg>
  <span class="sep"></span>
  <svg class="app-zip" viewBox="0 0 50 100"><path fill="#fbfbfb" d="M0 16h33l17 17v49H0z"/><path fill="#dcdcdc" d="M33 16v17h17z"/><path fill="#555" d="M21 16h8v20h-8z"/><path stroke="#bbb" stroke-width="6" stroke-dasharray="1.500 1.500" d="M25 16v20"/><rect x="21" y="35" width="8" height="19" rx="3" fill="#777" stroke="#333" stroke-width="1.500"/><text x="25" y="78" text-anchor="middle" class="zip">ZIP</text></svg>
  <svg class="app-win" viewBox="0 0 74 100"><rect y="26" width="74" height="42" fill="#f6f6f6"/><rect y="26" width="74" height="5" fill="#dcdcdc"/><rect y="31" width="74" height="16" fill="#2e88d0"/><text x="12" y="36.500" class="mini mw">AWS TrainingTalk APAC | Deadline Rem...</text><text x="12" y="42" class="mini ms">In Reference</text><rect x="3" y="35" width="5" height="5" fill="#fff"/><path fill="#dde0e6" d="M0 47h74v5H0z"/><text x="9" y="51.500" class="mini">AWS TrainingTalk APAC | Deadline</text><text x="9" y="56.500" class="mini">AWS ABC Whiteboard session</text><text x="9" y="61.500" class="mini">Time changed: AWS TrainingTalk</text><path fill="#d55" d="M5 49h2v2H5zM5 54h2v2H5zM5 59h2v2H5zM62 54h9v1.500h-9zM62 59h9v1.500h-9z"/><path fill="#fff" d="M60 64h14v15H60z"/><path fill="none" stroke="#444" d="M62 68l5 4 7-8"/><path fill="url(#gOut)" d="M47 60l16-3v26l-16-3z"/><ellipse cx="54" cy="70" rx="3" ry="4.500" fill="none" stroke="#fff" stroke-width="2"/></svg>
  <svg class="app-trash" viewBox="0 0 58 100"><path fill="#f3f3f3" d="M6 16l12-6 10 4 12-4 14 8-4 10H8z"/><path fill="#444" d="M14 18l6-6 2 10zM30 12l8 2-4 10zM42 16l6 4-8 6z"/><path fill="#57b6d8" d="M22 17l5-1-1 7z"/><path fill="#d65f4b" d="M36 20l4-5 1 7z"/><path fill="url(#gTrash)" d="M1 20q28 12 56 0l-7 56q-1 6-21 6T9 76z"/><ellipse cx="29" cy="20" rx="28" ry="6" fill="none" stroke="#dedede" stroke-width="1.800"/></svg>
</footer>
</body>
</html>
```
FILE: styles.css
```css
* { box-sizing: border-box; }
body {
  margin: 0;
  width: 2560px;
  height: 1600px;
  overflow: hidden;
  background: linear-gradient(#05070d 0, #05070d 1500px, #2b2b2b 1570px);
  font-family: "Liberation Sans", Arial, sans-serif;
  color: #333;
}
.defs { position: absolute; }
button { font-family: inherit; padding: 0; margin: 0; }

/* macOS menu bar */
.menubar {
  display: flex;
  height: 44px;
  margin-bottom: 2px;
  background: #d3d3d3;
  font-family: Inter, sans-serif;
  font-size: 27px;
  line-height: 45px;
  color: #222;
}
.apple { width: 26px; height: 32px; margin: 4px 0 0 42px; }
.menus {
  display: grid;
  grid-template-columns: 146px 81px 87px 99px 130px 181px 126px 139px 100px;
  width: 1386px;
  padding-left: 40px;
  letter-spacing: -.2px;
  white-space: nowrap;
}
.menus b { font-weight: 700; letter-spacing: .4px; }
.status {
  display: grid;
  grid-template-columns: 62px 57px 59px 62px 58px 58px 64px 62px 70px 76px 44px 80px 212px 60px 40px;
  align-items: center;
  white-space: nowrap;
}
.s-txt { letter-spacing: -.5px; }
.s-pct, .s-us { font-size: 24px; }
.s-time { font-size: 27.5px; letter-spacing: 0; }

/* browser window */
.window {
  display: flex;
  flex-direction: column;
  height: 1452px;
  border-radius: 10px;
  overflow: hidden;
  background: #fff;
}
.tabstrip {
  display: flex;
  height: 74px;
  padding-top: 17px;
  background: linear-gradient(#8f8f8f, #8f8f8f) 0 100% / 100% 1px no-repeat, #d5d5d5;
  font-family: Inter, sans-serif;
}
.lights { display: flex; gap: 16px; width: 144px; padding: 9px 0 0 24px; }
.lights i { width: 24px; height: 24px; border-radius: 50%; border: 1px solid; }
.red { background: #fc605c; border-color: #e0443e !important; }
.yellow { background: #fdbc40; border-color: #dea034 !important; }
.green { background: #34c84a; border-color: #27aa35 !important; }
.tabs { display: flex; }
.tab {
  display: flex;
  position: relative;
  width: 184px;
  height: 57px;
  margin-right: -27px;
  padding-left: 32px;
  font-size: 23px;
  letter-spacing: -.5px;
  color: #000;
}
.tab .shape { position: absolute; left: 0; top: 0; width: 184px; height: 57px; }
.tab .fav { position: relative; width: 31px; height: 31px; margin-top: 13px; flex: none; }
.tab .doc { width: 22px; height: 30px; margin-left: 4px; margin-right: 5px; color: #858585; }
.tab .dark { color: #505050; }
.tab span {
  position: relative;
  flex: none;
  width: 50px;
  margin-left: 12px;
  line-height: 57px;
  overflow: hidden;
  white-space: nowrap;
  -webkit-mask-image: linear-gradient(90deg, #000 72%, transparent);
  mask-image: linear-gradient(90deg, #000 72%, transparent);
}
.tab .full { -webkit-mask-image: none; mask-image: none; }
.tab .x { position: relative; flex: none; width: 16px; height: 16px; margin: 21px 0 0 10px; }
.tab-fill { fill: #d0d0d0; }
.tab-on { fill: #f2f2f2; }
.tab-line { fill: none; stroke: #8f8f8f; stroke-width: 1.3; }
.newtab { width: 66px; height: 33px; margin: 16px 0 0 22px; }
.profile { margin: 8px 0 0 20px; font-size: 23.5px; line-height: 31px; color: #1a1a1a; }

.toolbar {
  display: flex;
  align-items: center;
  height: 74px;
  flex: none;
  border-bottom: 1px solid #cfcfcf;
  background: #f2f2f2;
}
.toolbar > svg { flex: none; }
.nav-back { width: 26px; height: 26px; margin-left: 23px; }
.nav-fwd { width: 26px; height: 26px; margin-left: 30px; }
.nav-reload { width: 28px; height: 28px; margin-left: 29px; }
.nav-home { width: 28px; height: 28px; margin-left: 28px; }
.omnibox {
  display: flex;
  flex: none;
  align-items: center;
  width: 1743px;
  height: 54px;
  margin-left: 23px;
  border: 2px solid #bdbdbd;
  border-radius: 6px;
  background: #fff;
}
.info { width: 28px; height: 28px; margin-left: 12px; }
.url {
  width: 1656px;
  padding-left: 11px;
  font: 27px/50px Inter, sans-serif;
  color: #000;
}
.url em { font-style: normal; color: #767676; }
.star { width: 30px; height: 30px; }
.exts { display: grid; grid-template-columns: repeat(9, 56px); margin-left: 20px; height: 32px; }
.exts svg { width: 32px; height: 32px; }
.exts .lp-ext { width: 42px; height: 42px; }
.lp-num { font: 700 19px "Liberation Sans", sans-serif; fill: #fff; }
.dots { width: 8px; height: 28px; margin-left: 13px; fill: #555; }

.lastpass {
  display: flex;
  flex: none;
  height: 80px;
  align-items: center;
  background: #3acc74;
}
.lp-logo { width: 32px; height: 32px; margin-left: 16px; }
.lp-msg {
  width: 2018px;
  padding-left: 20px;
  padding-bottom: 3px;
  font-size: 30px;
  color: #fff;
  -webkit-text-stroke: .7px #fff;
}
.lastpass button {
  flex: none;
  height: 52px;
  margin-top: -4px;
  border: 2px solid #c6c6c6;
  border-radius: 6px;
  background: #fff;
  box-shadow: 0 1px 3px rgba(0, 0, 0, .3);
  color: #333;
  font-weight: 700;
  font-size: 30px;
  line-height: 50px;
}
.b-confirm { width: 151px; }
.lastpass .b-save { width: 241px; margin-left: 13px; }
.lp-x { width: 32px; height: 30px; margin: 0 0 0 9px; }

/* Jenkins configuration page */
.page { position: relative; flex: 1; overflow: hidden; }
.panel {
  width: 1890px;
  height: 1300px;
  margin-left: 336px;
  border: solid #ccc;
  border-width: 0 2px;
  background: #f9f9f9;
}
.sections { display: flex; height: 46px; margin-bottom: 18px; font-size: 26px; line-height: 22px; color: #999; white-space: nowrap; }
.sec { border-bottom: 2px solid #ccc; background: #eee; }
.s-left { display: flex; gap: 64px; width: 552px; padding-left: 41px; border-right: 2px solid #ccc; }
.s-on { width: 216px; padding-left: 21px; border: 0; background: none; font-weight: 700; color: #000; }
.s-right { display: flex; gap: 64px; flex: 1; padding-left: 40px; border-left: 2px solid #ccc; }
section { margin: 0 30px 30px 10px; border-top: 2px solid #dcdcdc; }
h2 { margin: 0 0 36px 29px; padding-top: 17px; font-size: 38.4px; line-height: 43px; letter-spacing: .3px; }
.group { width: 1850px; margin-left: 6px; border-left: 10px solid #e0e0e0; }
.row { display: flex; height: 56px; padding-left: 16px; font-size: 26px; line-height: 55px; }
.row span { flex: 1; padding-left: 12.5px; }
.q { width: 32px; height: 32px; margin: 14px 20px 0 0; flex: none; }
.cb {
  flex: none;
  width: 24px;
  height: 24px;
  margin-top: 15px;
  border: 1.500px solid #b4b4b4;
  border-top-color: #9b9b9b;
  border-radius: 6px;
  background: #fff;
  box-shadow: inset 0 2px 2px -1px rgba(0, 0, 0, .15);
}
.cb.on { border: 0; background: #3f98fb; box-shadow: none; }
.cb svg { display: block; width: 24px; height: 24px; }
.group .row .q { margin-right: 20px; }
.strip { height: 20px; margin-left: -6px; background: rgba(0, 0, 0, .03); }
.builder { height: 200px; margin: 50px 4px 0 20px; border-left: 10px solid #e0e0e0; padding-left: 4px; }
.step { position: relative; height: 200px; border: 2px solid #d4d4d4; background: #f2f2f2; }
.step-head { display: flex; justify-content: space-between; height: 80px; padding-left: 62px; font-size: 26px; line-height: 82px; }
.step-head .q { margin: 28px 34px 0 0; }
.code {
  width: 1510px;
  height: 100px;
  margin-left: 208px;
  padding: 13px 18px;
  border: 2px solid #bbb;
  background: #fff;
  font: 22px/28px "Liberation Mono", monospace;
}
.del {
  position: absolute;
  right: 86px;
  top: -6px;
  width: 64px;
  height: 40px;
  border: 2px solid #b93a30;
  border-radius: 0 0 6px 6px;
  background: #d24a3f;
  color: #f5f5f5;
  font: 700 24px/34px "Noto Sans", sans-serif;
}
.sticky {
  position: absolute;
  left: 338px;
  top: 1078px;
  display: flex;
  gap: 24px;
  width: 400px;
  height: 200px;
  padding: 40px 0 0 44px;
  border: 2px solid #a8cdb9;
  border-radius: 0 20px 0 0;
  background: rgba(246, 251, 241, .78);
}
.sticky button { height: 78px; padding-bottom: 2px; border: 2px solid; border-radius: 5px; font-weight: 700; font-size: 24px; }
.save { width: 140px; background: #4a7b8a; border-color: #2f5466 !important; color: #eee; }
.apply { width: 150px; background: #d0dff0; border-color: #6497cf !important; color: #4d4d4d; }
.shade {
  position: absolute;
  left: 0;
  bottom: 0;
  width: 100%;
  height: 100px;
  background: linear-gradient(rgba(0, 0, 0, 0), rgba(0, 0, 0, .08));
  -webkit-mask-image: linear-gradient(90deg, transparent, #000 150px, #000 2410px, transparent);
  mask-image: linear-gradient(90deg, transparent, #000 150px, #000 2410px, transparent);
}

/* Dock */
.dock {
  display: flex;
  width: 2431px;
  height: 100px;
  margin: 2px 0 0 64px;
  padding-left: 5.5px;
  border-radius: 12px 12px 0 0;
  background: #656366;
}
.dock > svg { flex: none; height: 100px; }
.app { width: 82.16px; }
.run { background: radial-gradient(circle at 41px 92px, #000 3.500px, transparent 4.500px); }
.sep { flex: none; width: 2px; height: 72px; margin: 14px 0 0 19px; background: #3c3b3d; }
.app-zip { width: 50px; margin-left: 34px; }
.app-win { width: 74px; margin-left: 20px; }
.app-trash { width: 58px; margin-left: 17px; }
.petals { mix-blend-mode: multiply; }
.petals ellipse { mix-blend-mode: multiply; }
.cal-mon { font: 13.500px Inter, sans-serif; letter-spacing: -.6px; fill: #fff; }
.cal-day { font: 300 35px Inter, sans-serif; fill: #222; }
.map-sign { font: 700 7px Inter, sans-serif; fill: #fff; }
.map-3d { font: 10px Inter, sans-serif; fill: #444; }
.badge { font: 19px Inter, sans-serif; letter-spacing: -.8px; fill: #fff; }
.b4 { font-size: 17px; }
.term { font: 700 17px "Liberation Mono", monospace; fill: #f4f4f4; }
.slack-s { font: 700 34px Inter, sans-serif; fill: #111; }
.zip { font: 12px Inter, sans-serif; fill: #444; }
.mini { font: 3.500px "Liberation Sans", sans-serif; fill: #555; }
.mw { font-weight: 700; font-size: 3.2px; fill: #fff; }
.ms { fill: #d5e8f8; }
```
